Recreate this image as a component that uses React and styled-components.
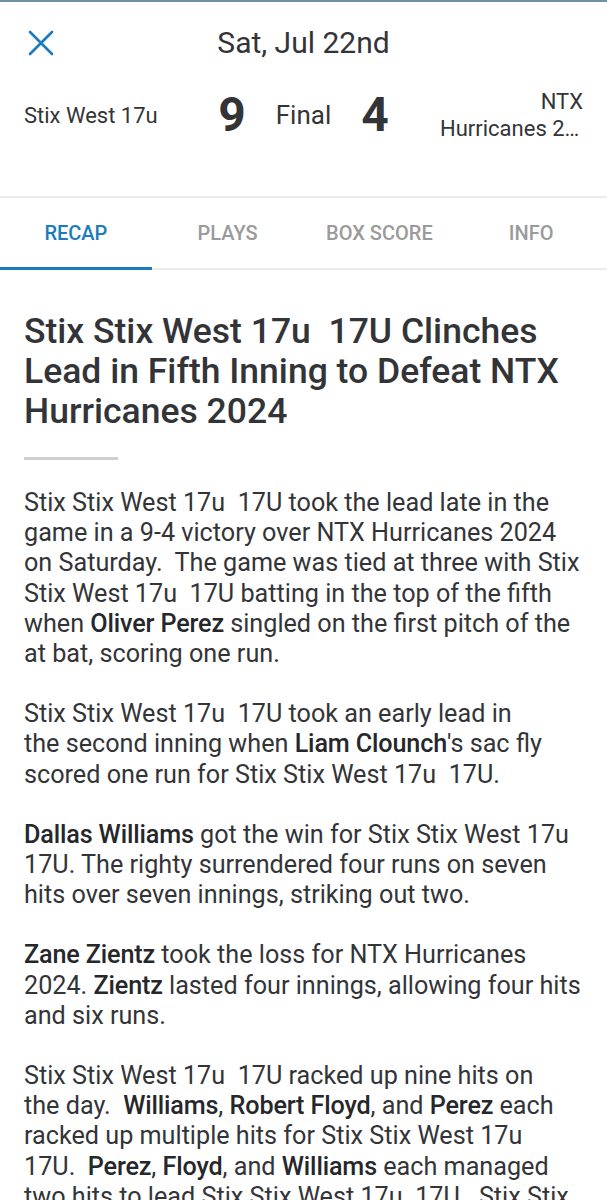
import React from 'react';
import styled, { createGlobalStyle } from 'styled-components';

const Global = createGlobalStyle`
  body {
    margin: 0;
    background: #ffffff;
    font-family: Roboto, "Noto Sans", "Liberation Sans", sans-serif;
    color: #333438;
  }
`

const Page = styled.div`
  width: 607px;
  border-top: 2px solid #6f94a0;
`

const Header = styled.header`
  display: flex;
  flex-direction: column;
  padding: 23px 24px 0 24px;
  height: 171px;
  border-bottom: 2px solid #ececec;
`

const TopRow = styled.div`
  display: grid;
  grid-template-columns: 40px 1fr 40px;
  align-items: center;
  height: 32px;
`

const CloseButton = styled.button`
  border: 0;
  background: none;
  padding: 0 0 0 3px;
  display: flex;
  align-items: center;
  cursor: pointer;
`

const DateTitle = styled.h1`
  margin: 0;
  text-align: center;
  font-size: 30px;
  font-weight: 400;
  color: #333438;
`

const ScoreRow = styled.div`
  display: grid;
  grid-template-columns: 1fr auto 1fr;
  align-items: center;
  margin-top: 30px;
`

const TeamName = styled.div`
  font-size: 22px;
  line-height: 27px;
  text-align: ${p => (p.$right ? 'right' : 'left')};
  justify-self: ${p => (p.$right ? 'end' : 'start')};
  width: ${p => (p.$right ? '143px' : 'auto')};
`

const NameLine = styled.div`
  white-space: nowrap;
  overflow: hidden;
  text-overflow: ellipsis;
`

const ScoreBox = styled.div`
  display: flex;
  align-items: center;
  gap: 30px;
`

const Score = styled.span`
  font-size: 48px;
  font-weight: 700;
  line-height: 56px;
  color: #333438;
`

const Status = styled.span`
  font-size: 26px;
  color: #333438;
`

const Tabs = styled.nav`
  display: grid;
  grid-template-columns: repeat(4, 1fr);
  height: 70px;
  border-bottom: 2px solid #ededed;
`

const Tab = styled.div`
  display: flex;
  align-items: center;
  justify-content: center;
  font-size: 20px;
  font-weight: 500;
  color: ${p => (p.$active ? '#1a7bc0' : '#9a9a9a')};
  border-bottom: 3px solid ${p => (p.$active ? '#1a7bc0' : 'transparent')};
  margin-bottom: -2px;
`

const Article = styled.article`
  padding: 41px 24px 0 24px;
`

const Headline = styled.h2`
  margin: 0;
  font-size: 35.5px;
  line-height: 40px;
  font-weight: 500;
  white-space: pre-wrap;
  color: #333438;
`

const Rule = styled.hr`
  width: 94px;
  height: 3px;
  border: 0;
  background: #cfcfcf;
  margin: 26px 0 28px 0;
`

const Para = styled.p`
  margin: 0 0 30px 0;
  font-size: 25.2px;
  line-height: 30.2px;
  white-space: pre-wrap;
  color: #333438;
`

const Name = styled.b`
  font-weight: 500;
  letter-spacing: -0.15px;
  color: #26272b;
`

const CloseIcon = () => (
  <svg width="28" height="28" viewBox="0 0 28 28">
    <path d="M3 3 L25 25 M25 3 L3 25" stroke="#1a7bc0" strokeWidth="2.6" strokeLinecap="round" />
  </svg>
);

const tabs = ['RECAP', 'PLAYS', 'BOX SCORE', 'INFO'];

export default function App() {
  return (
    <Page>
      <Global />
      <Header>
        <TopRow>
          <CloseButton aria-label="close"><CloseIcon /></CloseButton>
          <DateTitle>Sat, Jul 22nd</DateTitle>
          <span />
        </TopRow>
        <ScoreRow>
          <TeamName>Stix West 17u</TeamName>
          <ScoreBox>
            <Score>9</Score>
            <Status>Final</Status>
            <Score>4</Score>
          </ScoreBox>
          <TeamName $right>
            <NameLine>NTX</NameLine>
            <NameLine>Hurricanes 2024</NameLine>
          </TeamName>
        </ScoreRow>
      </Header>
      <Tabs>
        {tabs.map((t, i) => (
          <Tab key={t} $active={i === 0}>{t}</Tab>
        ))}
      </Tabs>
      <Article>
        <Headline>Stix Stix West 17u  17U Clinches Lead in Fifth Inning to Defeat NTX Hurricanes 2024</Headline>
        <Rule />
        <Para>
          Stix Stix West 17u  17U took the lead late in the game in a 9-4 victory over NTX Hurricanes 2024 on Saturday.  The game was tied at three with Stix Stix West 17u  17U batting in the top of the fifth when <Name>Oliver Perez</Name> singled on the first pitch of the at bat, scoring one run.
        </Para>
        <Para>
          {'Stix Stix West 17u  17U took an early lead in\nthe second inning when '}<Name>Liam Clounch</Name>'s sac fly scored one run for Stix Stix West 17u  17U.
        </Para>
        <Para>
          <Name>Dallas Williams</Name> got the win for Stix Stix West 17u  17U. The righty surrendered four runs on seven hits over seven innings, striking out two.
        </Para>
        <Para>
          <Name>Zane Zientz</Name> took the loss for NTX Hurricanes 2024. <Name>Zientz</Name> lasted four innings, allowing four hits and six runs.
        </Para>
        <Para>
          {'Stix Stix West 17u  17U racked up nine hits on\nthe day.  '}<Name>Williams</Name>, <Name>Robert Floyd</Name>, and <Name>Perez</Name> each racked up multiple hits for Stix Stix West 17u  17U.  <Name>Perez</Name>, <Name>Floyd</Name>, and <Name>Williams</Name> each managed two hits to lead Stix Stix West 17u  17U.  Stix Stix West 17u  17U stole four bases during the game as two players stole more than one.
        </Para>
      </Article>
    </Page>
  );
}
